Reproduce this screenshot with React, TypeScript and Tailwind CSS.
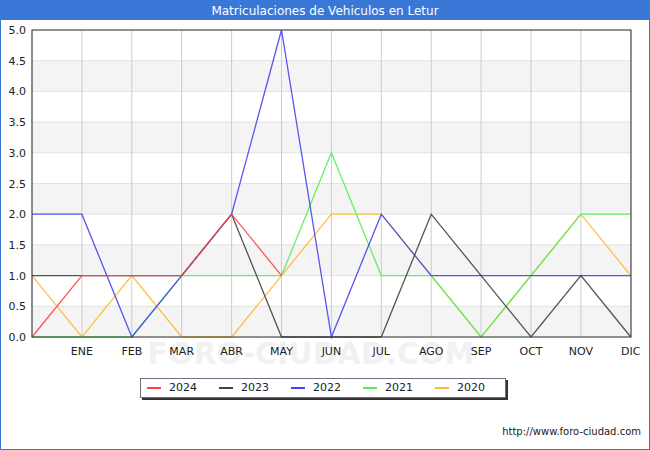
const series = [
  { name: '2020', color: '#ffb833', data: [1, 0, 1, 0, 0, 1, 2, 2, 1, 0, 1, 2, 1] },
  { name: '2021', color: '#55ee55', data: [0, 0, 0, 1, 1, 1, 3, 1, 1, 0, 1, 2, 2] },
  { name: '2022', color: '#4444ee', data: [2, 2, 0, 1, 2, 5, 0, 2, 1, 1, 1, 1, 1] },
  { name: '2023', color: '#444444', data: [1, 1, 1, 1, 2, 0, 0, 0, 2, 1, 0, 1, 0] },
  { name: '2024', color: '#ff4444', data: [0, 1, 1, 1, 2, 1] },
];
const months = ['ENE', 'FEB', 'MAR', 'ABR', 'MAY', 'JUN', 'JUL', 'AGO', 'SEP', 'OCT', 'NOV', 'DIC'];
const X0 = 31, DX = 49.9, Y0 = 317, DY = 61.4;
const px = (i: number) => X0 + i * DX;
const py = (v: number) => Y0 - v * DY;

function Chart() {
  const ticks = Array.from({ length: 11 }, (_, i) => i * 0.5);
  return (
    <svg width={648} height={346} className="block" style={{ fontFamily: '"DejaVu Sans", sans-serif' }}>
      {[0, 2, 4, 6, 8].map((k) => (
        <rect key={k} x={X0} y={py(ticks[k] + 0.5)} width={599} height={DY / 2} fill="#f4f4f4" />
      ))}
      {ticks.map((t) => (
        <line key={t} x1={X0} x2={630} y1={py(t)} y2={py(t)} stroke="#e2e2e2" />
      ))}
      {Array.from({ length: 13 }, (_, i) => (
        <line key={i} x1={px(i)} x2={px(i)} y1={10} y2={317} stroke="#cccccc" />
      ))}
      {ticks.map((t) => (
        <text key={t} x={25} y={py(t) + 4} fontSize={11} textAnchor="end" fill="#222">
          {t.toFixed(1)}
        </text>
      ))}
      <text x={310} y={344} fontSize={30} textAnchor="middle" fill="#000" opacity={0.05} fontWeight="bold">
        FORO-CIUDAD.COM
      </text>
      {months.map((m, i) => (
        <text key={m} x={px(i + 1)} y={335} fontSize={11} textAnchor="middle" fill="#222">
          {m}
        </text>
      ))}
      {series.map((s) => (
        <polyline
          key={s.name}
          points={s.data.map((v, i) => `${px(i)},${py(v)}`).join(' ')}
          fill="none"
          stroke={s.color}
          strokeWidth={1.3}
          opacity={0.9}
        />
      ))}
      <rect x={X0} y={10} width={599} height={307} fill="none" stroke="#333" />
    </svg>
  );
}

export default function App() {
  return (
    <div className="w-[650px] h-[450px] border border-[#3a78d8] bg-white flex flex-col" style={{ fontFamily: '"DejaVu Sans", sans-serif' }}>
      <div className="h-[19px] bg-[#3a78d8] text-white text-[12px] flex items-center justify-center shrink-0">
        Matriculaciones de Vehiculos en Letur
      </div>
      <Chart />
      <div className="flex justify-center mt-[12px] pr-[4px]">
        <div className="flex items-center gap-[22px] h-[20px] px-[6px] pr-[20px] border border-gray-500 bg-white text-[11px] text-[#222] shadow-[2px_2px_0_#333]">
          {[...series].reverse().map((s) => (
            <div key={s.name} className="flex items-center gap-[8px]">
              <span className="block w-[14px] h-[2px]" style={{ background: s.color }} />
              {s.name}
            </div>
          ))}
        </div>
      </div>
      <div className="mt-auto mb-[10px] pr-[8px] text-right text-[10px] text-[#222]">http://www.foro-ciudad.com</div>
    </div>
  );
}
